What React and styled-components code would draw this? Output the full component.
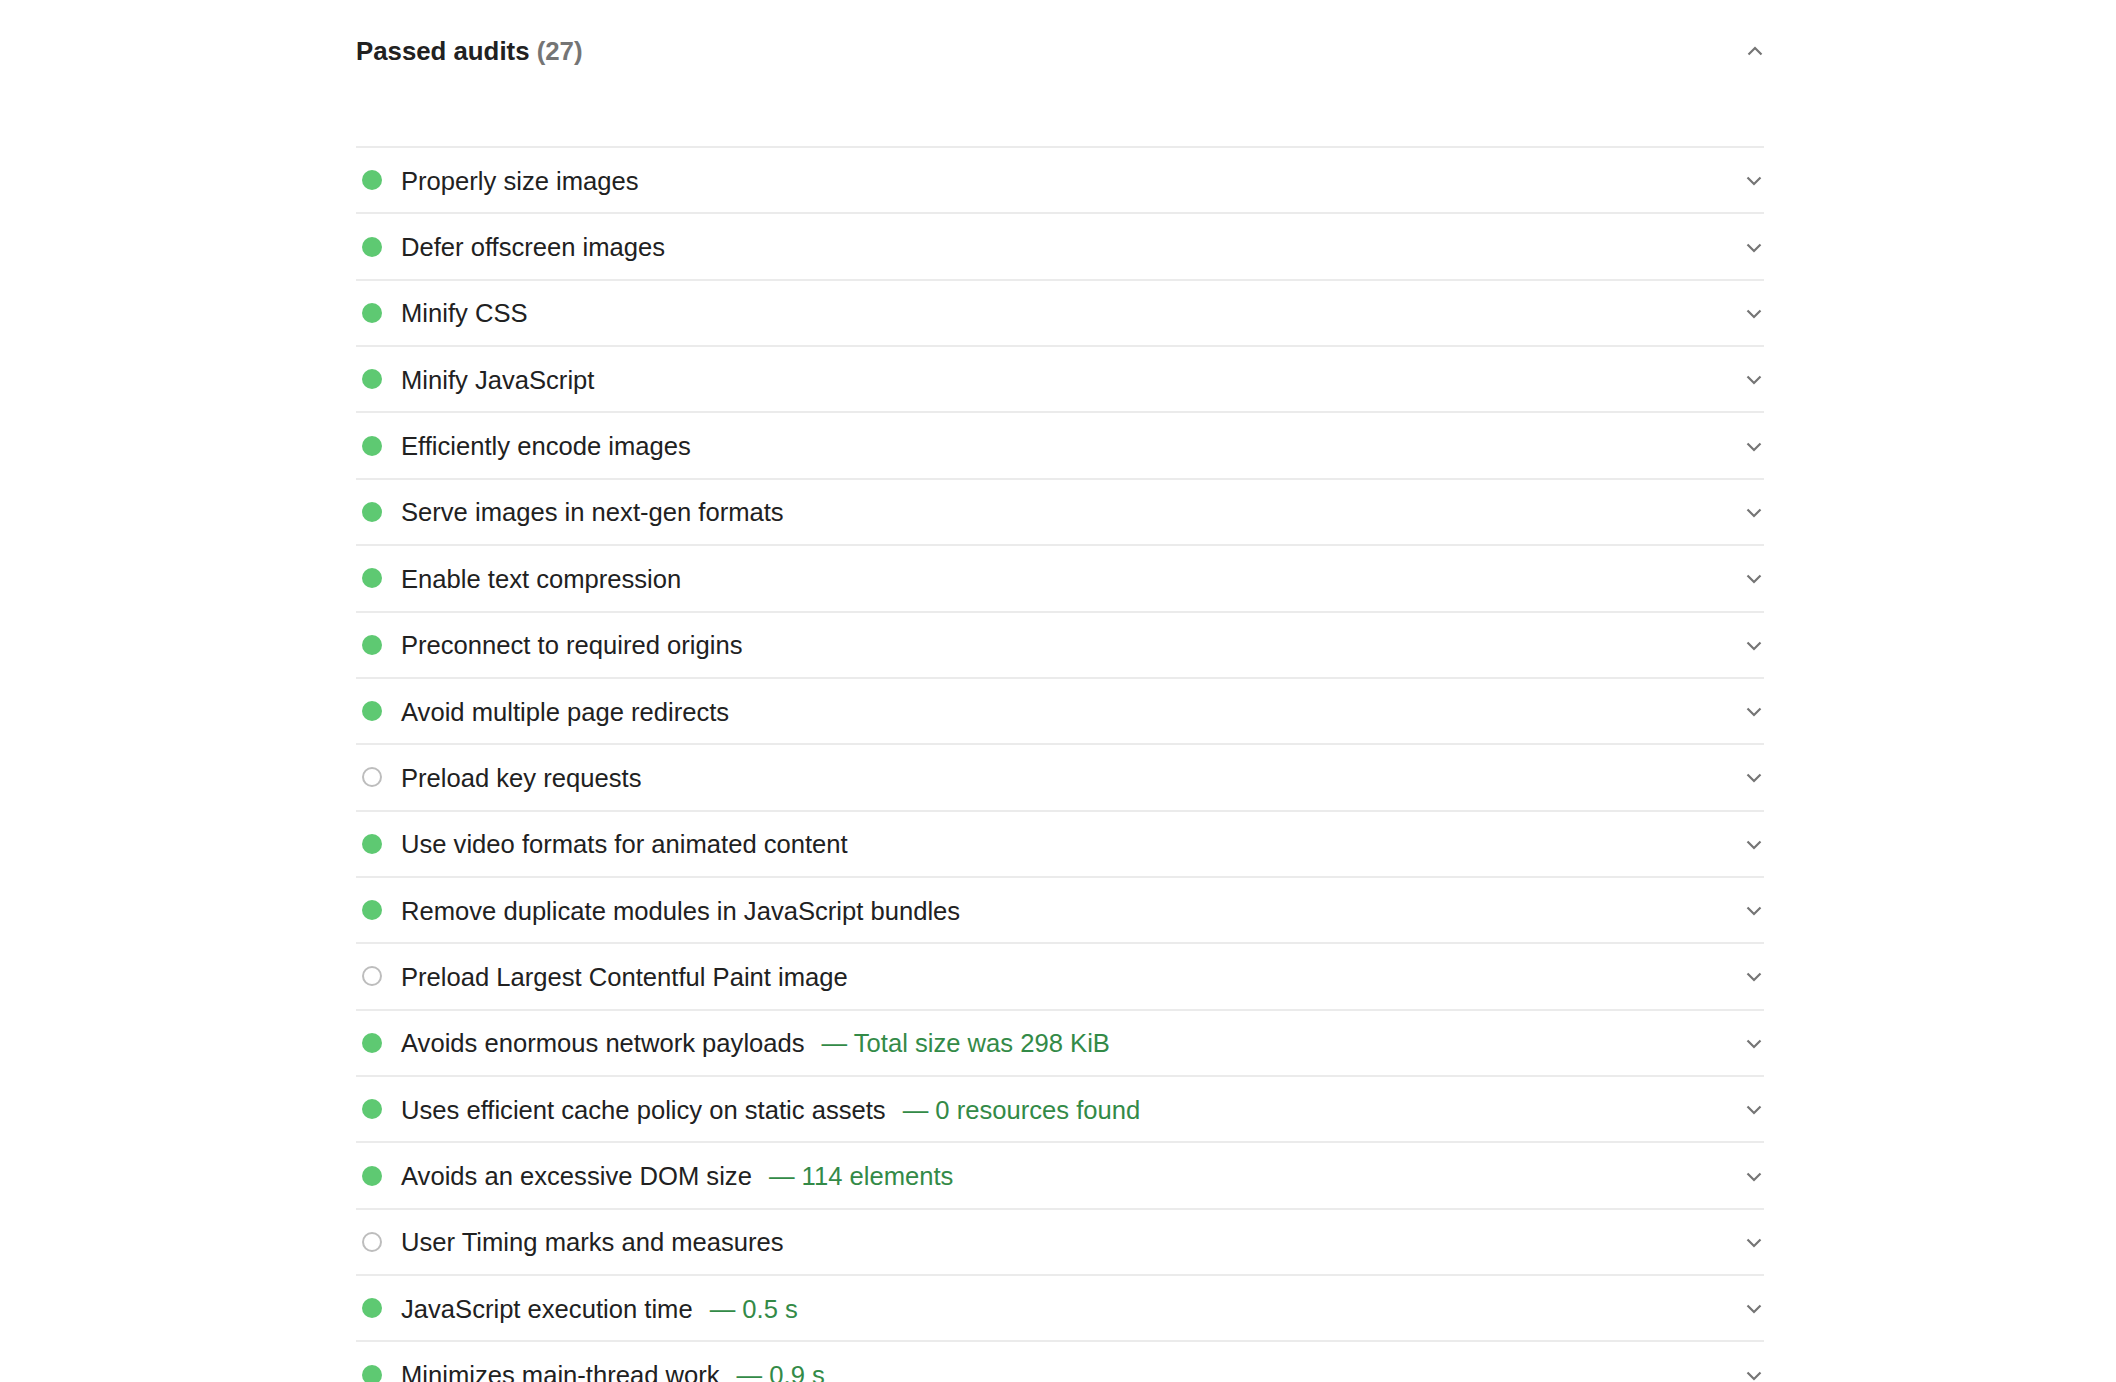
import React from 'react'
import styled, { createGlobalStyle } from 'styled-components'

const GlobalStyle = createGlobalStyle`
  html, body {
    margin: 0;
    padding: 0;
    background: #fff;
  }
  body {
    font-family: "Liberation Sans", Arial, Helvetica, sans-serif;
    color: #212121;
  }
`

const Container = styled.div`
  width: 1408px;
  margin-left: 356px;
`

const Header = styled.div`
  height: 102px;
  display: flex;
  align-items: center;
  justify-content: space-between;
  margin-bottom: 44px;
`

const Title = styled.h2`
  margin: 0;
  font-size: 25.8px;
  font-weight: 700;
  color: #212121;
`

const Count = styled.span`
  color: #757575;
`

const Chevron = styled.svg`
  width: 16px;
  height: 10px;
  margin-right: 1px;
  flex-shrink: 0;
  transform: ${p => (p.$up ? 'rotate(180deg)' : 'none')};
`

const List = styled.div`
  display: flex;
  flex-direction: column;
`

const Row = styled.div`
  box-sizing: border-box;
  height: 66.36px;
  border-top: 2px solid #ebebeb;
  display: flex;
  align-items: center;
  padding: 2px 1px 0 6px;
`

const Dot = styled.span`
  box-sizing: border-box;
  width: 20px;
  height: 20px;
  border-radius: 50%;
  flex-shrink: 0;
  margin-top: -2px;
  background: ${p => (p.$hollow ? 'transparent' : '#5ec972')};
  border: ${p => (p.$hollow ? '2px solid #bdbdbd' : 'none')};
  margin-right: 19px;
`

const Label = styled.div`
  flex: 1;
  font-size: 25.6px;
  color: #212121;
  display: flex;
  align-items: baseline;
`

const Value = styled.span`
  color: #338a47;
  margin-left: 17px;
`

const ChevronIcon = ({ up }) => (
  <Chevron $up={up} viewBox="0 0 16 10">
    <path d="M1.5 1.5 L8 8 L14.5 1.5" fill="none" stroke="#757575" strokeWidth="2.2" />
  </Chevron>
)

const audits = [
  { title: 'Properly size images' },
  { title: 'Defer offscreen images' },
  { title: 'Minify CSS' },
  { title: 'Minify JavaScript' },
  { title: 'Efficiently encode images' },
  { title: 'Serve images in next-gen formats' },
  { title: 'Enable text compression' },
  { title: 'Preconnect to required origins' },
  { title: 'Avoid multiple page redirects' },
  { title: 'Preload key requests', hollow: true },
  { title: 'Use video formats for animated content' },
  { title: 'Remove duplicate modules in JavaScript bundles' },
  { title: 'Preload Largest Contentful Paint image', hollow: true },
  { title: 'Avoids enormous network payloads', value: 'Total size was 298 KiB' },
  { title: 'Uses efficient cache policy on static assets', value: '0 resources found' },
  { title: 'Avoids an excessive DOM size', value: '114 elements' },
  { title: 'User Timing marks and measures', hollow: true },
  { title: 'JavaScript execution time', value: '0.5 s' },
  { title: 'Minimizes main-thread work', value: '0.9 s' },
]

export default function App() {
  return (
    <>
      <GlobalStyle />
      <Container>
        <Header>
          <Title>
            Passed audits <Count>(27)</Count>
          </Title>
          <ChevronIcon up />
        </Header>
        <List>
          {audits.map(a => (
            <Row key={a.title}>
              <Dot $hollow={a.hollow} />
              <Label>
                {a.title}
                {a.value && <Value>— {a.value}</Value>}
              </Label>
              <ChevronIcon />
            </Row>
          ))}
        </List>
      </Container>
    </>
  )
}
